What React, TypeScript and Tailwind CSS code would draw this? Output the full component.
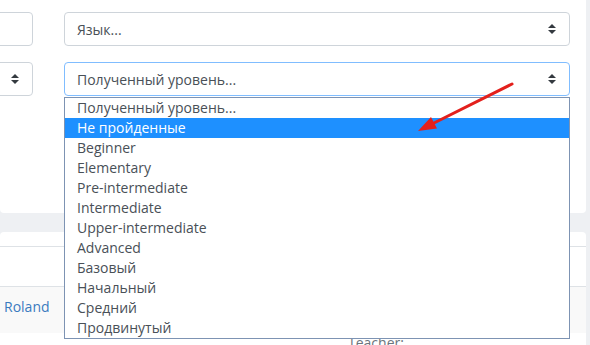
import React from 'react';

const levels = [
  'Полученный уровень...',
  'Не пройденные',
  'Beginner',
  'Elementary',
  'Pre-intermediate',
  'Intermediate',
  'Upper-intermediate',
  'Advanced',
  'Базовый',
  'Начальный',
  'Средний',
  'Продвинутый',
];

function SortIcon() {
  return (
    <svg width="8" height="10" viewBox="0 0 8 10" className="shrink-0">
      <path d="M4 0 L8 4 L0 4 Z" fill="#343a40" />
      <path d="M0 6 L8 6 L4 10 Z" fill="#343a40" />
    </svg>
  );
}

function Select({ label, focused = false, className = '' }: { label: string; focused?: boolean; className?: string }) {
  return (
    <div
      className={`h-[34px] flex items-center justify-between pl-[12px] pr-[13px] bg-white rounded-[4px] border text-[14px] text-[#495057] ${
        focused ? 'border-[#80bdff]' : 'border-[#ced4da]'
      } ${className}`}
    >
      <span>{label}</span>
      <SortIcon />
    </div>
  );
}

export default function App() {
  return (
    <div
      className="relative w-[590px] h-[345px] overflow-hidden bg-[#eef0f3]"
      style={{ fontFamily: '"Open Sans", "Noto Sans", sans-serif' }}
    >
      {/* Filter card */}
      <div className="w-[586px] h-[213px] bg-white rounded-b-[4px] overflow-hidden pt-[12px]">
        <div className="flex gap-[31px] pr-[16px]">
          <div className="w-[33px] flex flex-col gap-[16px]">
            <div className="w-[100px] -ml-[67px] h-[34px] bg-white border border-[#ced4da] rounded-[4px]" />
            <Select label="" className="w-[100px] -ml-[67px] pr-[12px]" />
          </div>
          <div className="flex-1 flex flex-col gap-[16px]">
            <Select label="Язык..." />
            <Select label="Полученный уровень..." focused />
          </div>
        </div>
      </div>

      {/* Results card */}
      <div className="mt-[19px] w-[586px] h-[200px] bg-white rounded-t-[4px]">
        <div className="h-[14px]" />
        <div className="h-[41px] border-t border-b border-[#dee2e6]" />
        <div className="h-[46px] bg-[#f9f9f9] pl-[4px] pt-[9px] text-[14px] text-[#3b7bbf]">Roland</div>
        <div className="pl-[348px] text-[14px] leading-[20px] text-[#6c757d]">Teacher:</div>
      </div>

      {/* Open dropdown list */}
      <div className="absolute left-[64px] top-[97px] w-[506px] border border-[#7d93b3] bg-white text-[14px] text-[#495057]">
        {levels.map((l, i) => (
          <div
            key={l}
            className={`h-[20px] leading-[20px] pl-[12px] ${i === 1 ? 'bg-[#1e90ff] text-white' : ''}`}
          >
            {l}
          </div>
        ))}
      </div>

      {/* Red annotation arrow */}
      <svg className="absolute left-0 top-0" width="590" height="345" viewBox="0 0 590 345">
        <line x1="512" y1="84" x2="433" y2="123.5" stroke="#e3201c" strokeWidth="3" strokeLinecap="round" />
        <polygon points="418,131 437,128.5 431,117" fill="#e3201c" />
      </svg>
    </div>
  );
}
